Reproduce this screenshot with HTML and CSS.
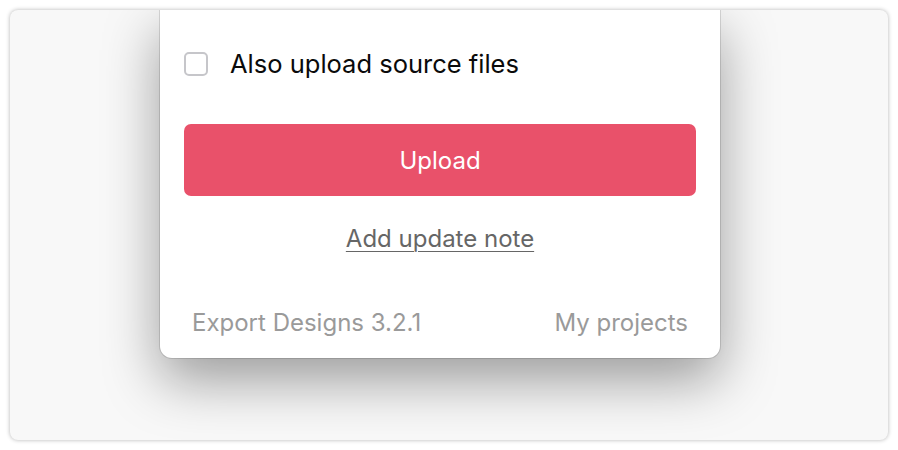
FILE: index.html
```html
<!DOCTYPE html>
<html>
<head>
<meta charset="utf-8">
<link rel="stylesheet" href="styles.css">
</head>
<body>
<div class="frame">
  <div class="card">
    <label class="option">
      <span class="checkbox"></span>
      <span class="option-text">Also upload source files</span>
    </label>
    <button class="upload">Upload</button>
    <div class="note-row"><a class="note">Add update note</a></div>
    <div class="footer">
      <span>Export Designs 3.2.1</span>
      <span>My projects</span>
    </div>
  </div>
</div>
</body>
</html>
```
FILE: styles.css
```css
html, body {
  margin: 0;
  padding: 0;
  background: #ffffff;
}
body {
  padding: 10px;
  font-family: Inter, "Liberation Sans", Arial, sans-serif;
}
.frame {
  width: 878px;
  height: 430px;
  box-sizing: border-box;
  padding-left: 150px;
  background: #f8f8f8;
  border-radius: 8px;
  overflow: hidden;
  box-shadow: 0 0 4px rgba(0, 0, 0, 0.3);
  display: flex;
  justify-content: flex-start;
  align-items: flex-start;
}
.card {
  width: 560px;
  box-sizing: border-box;
  background: #ffffff;
  border-radius: 0 0 12px 12px;
  padding: 42px 24px 22px;
  box-shadow: 0 0 0 1px rgba(0, 0, 0, 0.12), 0 22px 55px rgba(0, 0, 0, 0.38);
  display: flex;
  flex-direction: column;
}
.option {
  display: flex;
  align-items: center;
  height: 24px;
}
.checkbox {
  width: 24px;
  height: 24px;
  box-sizing: border-box;
  border: 2px solid #c6c6ca;
  border-radius: 5px;
  background: #fff;
}
.option-text {
  margin-left: 22px;
  font-size: 25.5px;
  color: #0a0a0a;
  margin-top: -2px;
}
.upload {
  margin-top: 48px;
  height: 72px;
  border: none;
  border-radius: 7px;
  background: #e9516a;
  color: #fff;
  font-family: inherit;
  font-size: 24px;
  font-weight: 400;
}
.note-row {
  margin-top: 28px;
  height: 28px;
  display: flex;
  justify-content: center;
  align-items: center;
}
.note {
  font-size: 24px;
  color: #666;
  text-decoration: underline;
  text-decoration-thickness: 1px;
  text-underline-offset: 4px;
}
.footer {
  margin-top: 56px;
  height: 28px;
  padding: 0 8px;
  display: flex;
  justify-content: space-between;
  align-items: center;
  font-size: 24px;
  color: #9a9a9a;
}
```
